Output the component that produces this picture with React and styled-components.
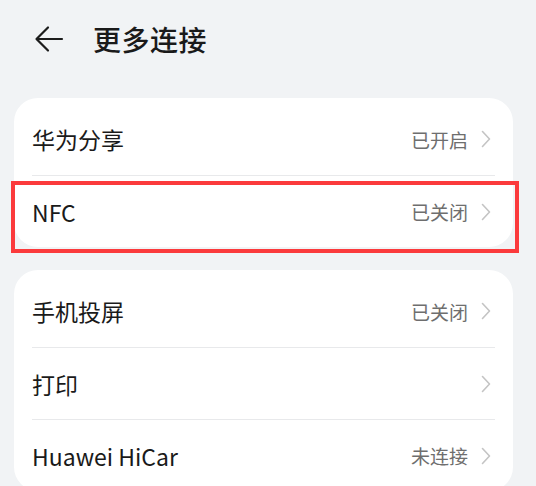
import React from 'react';
import styled, { createGlobalStyle } from 'styled-components';

const GlobalStyle = createGlobalStyle`
    html, body {
        margin: 0;
        padding: 0;
        background: #f1f3f5;
    }
    body {
        font-family: "Noto Sans CJK SC", "Noto Sans", sans-serif;
        color: #191919;
    }
`

const Page = styled.div`
    width: 536px;
    height: 486px;
    overflow: hidden;
    background: #f1f3f5;
`

const Header = styled.div`
    display: flex;
    align-items: center;
    height: 78px;
    padding-left: 33px;
    gap: 28px;
`

const BackButton = styled.div`
    display: flex;
    width: 32px;
    height: 30px;
    align-items: center;
    justify-content: center;
`

const Title = styled.h1`
    margin: 0;
    font-size: 28px;
    font-weight: 500;
    letter-spacing: 0.5px;
    color: #1a1a1a;
`

const Card = styled.div`
    margin: ${props => props.top}px 23px 0 14px;
    background: #fff;
    border-radius: 24px;
    padding: 5px 18px 0 18px;
`

const Row = styled.div`
    position: relative;
    box-sizing: border-box;
    display: flex;
    align-items: center;
    height: 72px;
    padding-right: 4px;
    border-top: ${props => props.first ? 'none' : '1px solid #e8e9eb'};
`

const Label = styled.span`
    flex: 1;
    font-size: 23px;
    font-weight: 400;
    color: #1a1a1a;
`

const Value = styled.span`
    font-size: 19px;
    color: #6e6e6e;
    margin-right: 13px;
`

const Highlight = styled.div`
    position: absolute;
    top: 5px;
    bottom: -6px;
    left: -21px;
    right: -24px;
    border: 4px solid #fb3a3c;
    pointer-events: none;
`

function Chevron() {
    return <svg width="10" height="18" viewBox="0 0 10 18">
        <path d="M1.5 1.5 L8.5 9 L1.5 16.5" fill="none" stroke="#c4c4c4" strokeWidth="1.6" strokeLinecap="round" strokeLinejoin="round" />
    </svg>
}

function Item(props) {
    return <Row first={props.first}>
        <Label>{props.label}</Label>
        {props.value && <Value>{props.value}</Value>}
        <Chevron />
        {props.highlight && <Highlight />}
    </Row>
}

export default function App() {
    return <Page>
        <GlobalStyle />
        <Header>
            <BackButton>
                <svg width="30" height="28" viewBox="0 0 30 28">
                    <path d="M28 14 H3 M14 2.5 L2.5 14 L14 25.5" fill="none" stroke="#1c1c1c" strokeWidth="2.2" strokeLinecap="round" strokeLinejoin="round" />
                </svg>
            </BackButton>
            <Title>更多连接</Title>
        </Header>
        <Card top={20}>
            <Item first label="华为分享" value="已开启" />
            <Item label="NFC" value="已关闭" highlight />
        </Card>
        <Card top={23}>
            <Item first label="手机投屏" value="已关闭" />
            <Item label="打印" />
            <Item label="Huawei HiCar" value="未连接" />
        </Card>
    </Page>
}
